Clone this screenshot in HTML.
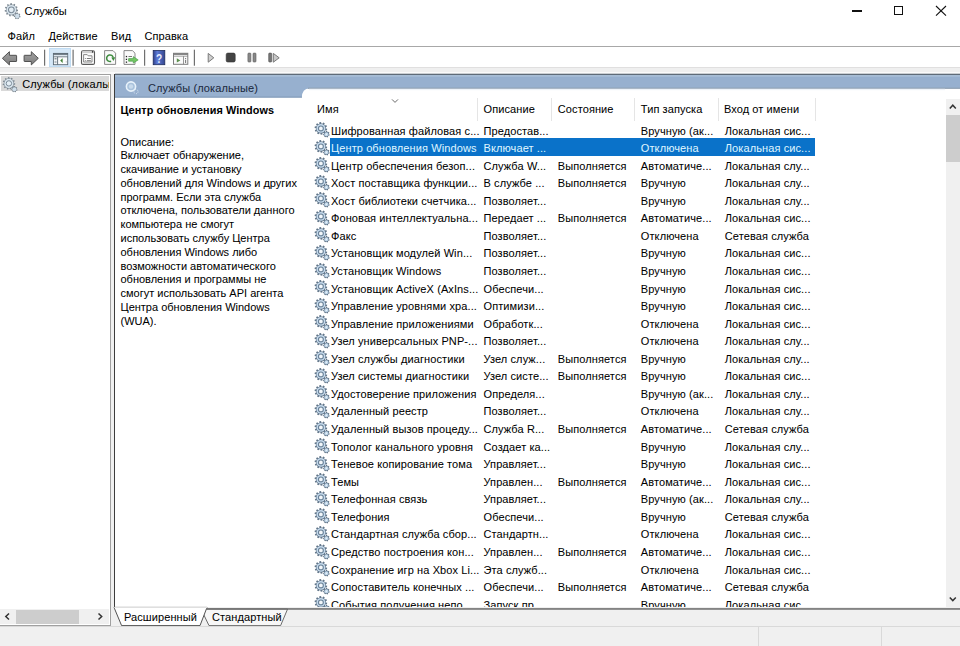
<!DOCTYPE html>
<html><head><meta charset="utf-8">
<style>
html,body{margin:0;padding:0}
body{width:960px;height:646px;position:relative;overflow:hidden;background:#fff;font-family:"Liberation Sans",sans-serif;font-size:11px;color:#000;-webkit-text-stroke:0.04px currentColor;letter-spacing:0.1px}
.a{position:absolute}
.t{position:absolute;white-space:nowrap;line-height:13px}
.row{position:absolute;left:312px;width:504px;height:17.5px}
.row .c{position:absolute;top:3px;line-height:13px;white-space:nowrap;color:#000}
.row .c0{left:19px} .row .c1{left:171.5px} .row .c2{left:245.8px} .row .c3{left:328.8px} .row .c4{left:412.8px}
.row.sel::before{content:"";position:absolute;left:18px;top:-0.8px;width:485px;height:17.5px;background:#0a72c9}
.row.sel .c{color:#dff4ff}
.gi{position:absolute;left:2.3px;top:0.6px;width:16px;height:16px}
.dl{position:absolute;left:120.5px;white-space:nowrap;line-height:13px;letter-spacing:0}
.hd{position:absolute;top:103px;line-height:13px;white-space:nowrap}
.sep{position:absolute;top:98px;width:1px;height:23px;background:#e5e5e5}
</style></head><body>
<svg width="0" height="0" style="position:absolute">
<defs>
<symbol id="gear" viewBox="0 0 16 16">
<path d="M11.90,6.43 L13.24,6.77 L12.88,8.53 L11.52,8.32 L10.93,9.36 L11.81,10.43 L10.49,11.64 L9.50,10.67 L8.42,11.16 L8.51,12.54 L6.73,12.75 L6.50,11.38 L5.33,11.15 L4.59,12.31 L3.03,11.43 L3.64,10.20 L2.84,9.32 L1.55,9.83 L0.81,8.20 L2.04,7.56 L1.90,6.37 L0.56,6.03 L0.92,4.27 L2.28,4.48 L2.87,3.44 L1.99,2.37 L3.31,1.16 L4.30,2.13 L5.38,1.64 L5.29,0.26 L7.07,0.05 L7.30,1.42 L8.47,1.65 L9.21,0.49 L10.77,1.37 L10.16,2.60 L10.96,3.48 L12.25,2.97 L12.99,4.60 L11.76,5.24 Z" fill="#62768a"/>
<circle cx="6.9" cy="6.4" r="4.45" fill="#c6dbee"/>
<circle cx="6.9" cy="6.4" r="2.45" fill="#f2f7fb" stroke="#6b8399" stroke-width="1.15"/>
<path d="M14.95,12.26 L15.68,12.52 L15.29,13.79 L14.54,13.59 L13.95,14.23 L14.20,14.97 L12.96,15.45 L12.64,14.74 L11.78,14.67 L11.35,15.33 L10.21,14.67 L10.57,13.97 L10.08,13.26 L9.30,13.33 L9.10,12.02 L9.87,11.87 L10.13,11.04 L9.58,10.48 L10.48,9.51 L11.08,10.02 L11.89,9.70 L11.98,8.93 L13.30,9.03 L13.28,9.81 L14.03,10.24 L14.70,9.83 L15.45,10.93 L14.82,11.40 Z" fill="#62768a"/>
<circle cx="12.4" cy="12.2" r="2.0" fill="#bfd6ea"/>
<circle cx="12.4" cy="12.2" r="0.75" fill="#eef5fa"/>
</symbol>
<symbol id="gearL" viewBox="0 0 16 16">
<path d="M11.99,6.15 L13.20,6.35 L13.06,7.70 L11.84,7.66 L11.32,8.94 L12.23,9.76 L11.38,10.83 L10.38,10.13 L9.24,10.93 L9.56,12.11 L8.28,12.55 L7.81,11.42 L6.42,11.48 L6.05,12.64 L4.74,12.32 L4.95,11.11 L3.75,10.41 L2.81,11.19 L1.88,10.21 L2.71,9.31 L2.08,8.07 L0.87,8.22 L0.62,6.89 L1.80,6.59 L1.94,5.20 L0.84,4.67 L1.35,3.42 L2.51,3.80 L3.38,2.71 L2.74,1.67 L3.85,0.89 L4.61,1.84 L5.93,1.39 L5.95,0.17 L7.31,0.11 L7.44,1.33 L8.79,1.66 L9.47,0.65 L10.64,1.33 L10.10,2.43 L11.05,3.44 L12.17,2.95 L12.79,4.16 L11.74,4.78 Z" fill="#7c8892"/>
<circle cx="6.9" cy="6.4" r="4.6" fill="#dae6ef"/>
<circle cx="6.9" cy="6.4" r="2.7" fill="#e4eef5" stroke="#7d8c99" stroke-width="1.0"/>
<path d="M14.90,12.32 L15.58,12.58 L15.24,13.68 L14.53,13.51 L13.86,14.23 L14.09,14.92 L13.01,15.34 L12.71,14.68 L11.72,14.61 L11.32,15.21 L10.32,14.63 L10.65,13.99 L10.10,13.17 L9.37,13.24 L9.20,12.09 L9.91,11.95 L10.20,11.01 L9.70,10.48 L10.49,9.63 L11.05,10.10 L11.97,9.74 L12.06,9.02 L13.21,9.11 L13.20,9.83 L14.05,10.33 L14.68,9.95 L15.33,10.91 L14.75,11.35 Z" fill="#7c8892"/>
<circle cx="12.4" cy="12.2" r="2.05" fill="#cfdeea"/>
</symbol>
</defs></svg>

<!-- title bar -->
<svg class="a" style="left:3.7px;top:2.6px;width:17px;height:17px" viewBox="0 0 16 16"><use href="#gearL"/></svg>
<div class="t" style="left:24.6px;top:4.8px;">Службы</div>
<div class="a" style="left:852px;top:10.3px;width:10px;height:1.3px;background:#111"></div>
<div class="a" style="left:894px;top:6.2px;width:7px;height:7px;border:1.1px solid #111"></div>
<svg class="a" style="left:935px;top:5px;width:12px;height:12px" viewBox="0 0 12 12"><path d="M1 1L11 10.6M11 1L1 10.6" stroke="#111" stroke-width="1.1"/></svg>

<!-- menu -->
<div class="t" style="left:7.6px;top:29.5px">Файл</div>
<div class="t" style="left:48.5px;top:29.5px">Действие</div>
<div class="t" style="left:111px;top:29.5px">Вид</div>
<div class="t" style="left:144.4px;top:29.5px">Справка</div>
<div class="a" style="left:0;top:46px;width:960px;height:1px;background:#a8a8a8"></div>

<!-- toolbar band -->
<div class="a" style="left:0;top:66.7px;width:960px;height:7px;background:#efefef;border-top:0.9px solid #e0dfdf;box-sizing:border-box"></div>
<div class="a" style="left:0;top:71.8px;width:960px;height:1.9px;background:#fafafa"></div>

<!-- left pane -->
<div class="a" style="left:0;top:73.5px;width:111px;height:552.5px;border-top:1.3px solid #a0a0a0;border-right:1.3px solid #a0a0a0;border-bottom:1.2px solid #a0a0a0;background:#fff;box-sizing:border-box"></div>
<div class="a" style="left:1px;top:76px;width:107.5px;height:15.3px;background:#d9d9d9"></div>
<svg class="a" style="left:2px;top:76.5px;width:16px;height:16px" viewBox="0 0 16 16"><use href="#gearL"/></svg>
<div class="a" style="left:0;top:76px;width:109px;height:16px;overflow:hidden"><div class="t" style="left:22.3px;top:1.5px">Службы (локальные)</div></div>
<div class="a" style="left:0;top:609px;width:109px;height:15px;background:#f0f0f0"></div>
<div class="a" style="left:15.6px;top:609.5px;width:63px;height:14px;background:#cdcdcd"></div>

<!-- splitter -->
<div class="a" style="left:111px;top:74px;width:3px;height:552px;background:#f0f0f0"></div>

<!-- right pane -->
<div class="a" style="left:114px;top:74px;width:846px;height:533px;background:#fff;border-left:1px solid #3c3c3c;box-sizing:border-box"></div>


<!-- vscroll -->
<div class="a" style="left:945.5px;top:98.5px;width:14.5px;height:508px;background:#f0f0f0"></div>
<div class="a" style="left:945.5px;top:114.5px;width:14.5px;height:47.5px;background:#cdcdcd"></div>
<!-- tab strip bg -->
<div class="a" style="left:111.2px;top:607px;width:849px;height:19px;background:#f0f0f0"></div>
<!-- vector overlay -->
<svg class="a" style="left:0;top:0" width="960" height="646" viewBox="0 0 960 646">
<!-- header blue -->
<rect x="115" y="73.7" width="845" height="1.6" fill="#5f6b78"/>
<path d="M115,75.3 H960 V88.4 H309.5 Q302,88.4 301.8,97.6 H115 Z" fill="#97b0cf"/>
<rect x="115" y="75.3" width="845" height="1.4" fill="#a9bfd8"/>
<rect x="115" y="96.6" width="187" height="1" fill="#8098b5"/>
<rect x="308" y="87.7" width="652" height="1.1" fill="#8d9dad"/>
<rect x="309" y="88.8" width="636" height="1.4" fill="#eef3f9"/>
<!-- toolbar: back arrow -->
<defs><linearGradient id="ag" x1="0" y1="0" x2="0" y2="1"><stop offset="0" stop-color="#a3a3a3"/><stop offset="1" stop-color="#7c7c7c"/></linearGradient></defs>
<path d="M2.4,58.3 L9.4,51.7 V55.3 H16.2 Q16.6,55.3 16.6,55.8 V61 Q16.6,61.5 16.2,61.5 H9.4 V64.9 Z" fill="url(#ag)" stroke="#505050" stroke-width="1" stroke-linejoin="round"/>
<path d="M38.3,58.3 L31.3,51.7 V55.3 H24.5 Q24.1,55.3 24.1,55.8 V61 Q24.1,61.5 24.5,61.5 H31.3 V64.9 Z" fill="url(#ag)" stroke="#505050" stroke-width="1" stroke-linejoin="round"/>
<rect x="44" y="49.7" width="1.2" height="16" fill="#707070"/>
<!-- highlighted button -->
<rect x="49.5" y="48.5" width="21" height="18" fill="#d5e7f7" stroke="#c0dcf3" stroke-width="1"/>
<rect x="53.4" y="53.4" width="14.3" height="11.3" fill="#fbfcfd" stroke="#5a6773" stroke-width="0.9"/>
<rect x="53.4" y="53.4" width="14.3" height="1.5" fill="#5a6773"/>
<rect x="53.9" y="54.9" width="13.3" height="1.6" fill="#dde6ee"/>
<line x1="53.4" y1="56.8" x2="67.7" y2="56.8" stroke="#5a6773" stroke-width="0.8"/>
<line x1="57.6" y1="56.8" x2="57.6" y2="64.7" stroke="#5a6773" stroke-width="0.9"/>
<rect x="54.5" y="58" width="2.1" height="1.5" fill="#8a959f"/>
<rect x="54.5" y="60.8" width="2.1" height="2.4" fill="#b3bcc4"/>
<path d="M62.6,58.3 L60.2,60.6 L62.6,62.9 Z" fill="#3d7f31"/>
<rect x="65.8" y="61.5" width="0.8" height="0.8" fill="#888"/>
<rect x="72.5" y="49.7" width="1.2" height="16" fill="#707070"/>
<!-- icon 4 -->
<rect x="81.5" y="50.8" width="13" height="13.6" rx="1.5" fill="#fbfbfb" stroke="#5a5a5a" stroke-width="1.1"/>
<rect x="82.2" y="51.5" width="11.6" height="1.6" fill="#cfcfcf"/>
<circle cx="92.6" cy="51.9" r="0.8" fill="#333"/>
<path d="M83.6,54.6 H87.2 L88.2,55.8 H92 V62 H83.6 Z" fill="#fdfdfd" stroke="#7d7d7d" stroke-width="0.9"/>
<rect x="84.9" y="58" width="0.9" height="0.9" fill="#777"/>
<rect x="84.9" y="60.2" width="0.9" height="0.9" fill="#777"/>
<line x1="86.8" y1="58.5" x2="90.9" y2="58.5" stroke="#6a6a6a" stroke-width="0.9"/>
<line x1="86.8" y1="60.7" x2="90.9" y2="60.7" stroke="#6a6a6a" stroke-width="0.9"/>
<!-- refresh doc -->
<path d="M104.6,50.6 H113 L115.6,53.2 V64.4 H104.6 Z" fill="#fafafa" stroke="#7a7a7a" stroke-width="0.9"/>
<path d="M111.1,61.3 A3.3,3.3 0 1 1 113.2,57.6" fill="none" stroke="#3f8b3f" stroke-width="1.5"/>
<path d="M111.3,57.4 L115.3,57.2 L113.4,61.0 Z" fill="#3f8b3f"/>
<!-- export doc -->
<path d="M124,50.6 H132.4 L135,53.2 V64.4 H124 Z" fill="#fafafa" stroke="#7a7a7a" stroke-width="0.9"/>
<rect x="125.8" y="55.9" width="1.3" height="1.3" fill="#222"/>
<rect x="125.8" y="58.7" width="1.3" height="1.3" fill="#222"/>
<rect x="125.8" y="61.5" width="1.3" height="1.3" fill="#222"/>
<line x1="128.5" y1="56.5" x2="132" y2="56.5" stroke="#555" stroke-width="0.8"/>
<path d="M128.6,58.6 H133.3 V56.6 L138.2,59.9 L133.3,63.1 V61.2 H128.6 Z" fill="#73c763" stroke="#3f963f" stroke-width="0.6"/>
<rect x="144" y="49.7" width="1.2" height="16" fill="#707070"/>
<!-- help -->
<defs><linearGradient id="hg" x1="0" y1="0" x2="1" y2="0"><stop offset="0" stop-color="#2e3f8c"/><stop offset="0.35" stop-color="#5d7ad6"/><stop offset="1" stop-color="#34468f"/></linearGradient></defs>
<rect x="153.2" y="50.5" width="11.6" height="14.2" fill="url(#hg)" stroke="#1d2b5c" stroke-width="0.8"/>
<text x="159.2" y="62.6" font-family="Liberation Sans" font-weight="bold" font-size="12" fill="#e6ecff" text-anchor="middle" transform="translate(159.2 62.6) scale(0.85 1.05) translate(-159.2 -62.6)" style="-webkit-text-stroke:0">?</text>
<!-- props -->
<rect x="173.5" y="53.3" width="14.3" height="11" fill="#fafafa" stroke="#7c7c7c" stroke-width="1"/>
<rect x="173.5" y="53.3" width="14.3" height="1.6" fill="#7c7c7c"/>
<line x1="173.5" y1="56.2" x2="187.8" y2="56.2" stroke="#7c7c7c" stroke-width="0.7"/>
<line x1="183.5" y1="56.2" x2="183.5" y2="64.3" stroke="#7c7c7c" stroke-width="0.8"/>
<path d="M176.8,58.2 L180.4,60.4 L176.8,62.6 Z" fill="#5c8f4e"/>
<rect x="185.2" y="58" width="0.9" height="1" fill="#666"/>
<rect x="185.2" y="59.8" width="0.9" height="3.2" fill="#666"/>
<rect x="193.8" y="49.7" width="1.2" height="16" fill="#707070"/>
<!-- play stop pause resume -->
<path d="M208.2,53.4 L213.8,57.8 L208.2,62.2 Z" fill="#cfcfcf" stroke="#7a7a7a" stroke-width="1"/>
<rect x="226.2" y="53.1" width="9" height="8.9" rx="1.6" fill="#444" stroke="#333" stroke-width="0.6"/>
<rect x="247.9" y="53.1" width="3" height="8.9" rx="0.8" fill="#888" stroke="#5d5d5d" stroke-width="0.6"/>
<rect x="253" y="53.1" width="3" height="8.9" rx="0.8" fill="#888" stroke="#5d5d5d" stroke-width="0.6"/>
<rect x="268.7" y="53.1" width="3" height="8.9" rx="0.8" fill="#777" stroke="#4d4d4d" stroke-width="0.6"/>
<path d="M273.3,53.4 L279.2,57.8 L273.3,62.2 Z" fill="#c8c8c8" stroke="#7a7a7a" stroke-width="1"/>
<!-- sort chevron -->
<path d="M392,99.4 L395,102.4 L398,99.4" fill="none" stroke="#6a6a6a" stroke-width="1"/>
<!-- vscroll arrows -->
<path d="M949.8,108.4 L952.8,105.2 L955.8,108.4" fill="none" stroke="#333" stroke-width="1.5"/>
<path d="M949.8,597.4 L952.8,600.6 L955.8,597.4" fill="none" stroke="#333" stroke-width="1.5"/>
<!-- left hscroll arrows -->
<path d="M9,613.5 L5.8,616.5 L9,619.5" fill="none" stroke="#333" stroke-width="1.5"/>
<path d="M98.5,613.5 L101.7,616.5 L98.5,619.5" fill="none" stroke="#333" stroke-width="1.5"/>
<!-- tabs -->
<path d="M201,609 L209,625.6 H280.6 L287.6,609 Z" fill="#f7f7f7" stroke="#5c5c5c" stroke-width="0.9"/>
<rect x="207" y="608.2" width="753" height="1.5" fill="#6a6a6a"/>
<path d="M114,607.4 L121.6,625.6 H200 L207,607.4 Z" fill="#fff" stroke="#3f3f3f" stroke-width="0.9"/>
<rect x="114.5" y="607.2" width="92.5" height="1" fill="#fff"/>
<line x1="114" y1="607.4" x2="207" y2="607.4" stroke="#e0e0e0" stroke-width="0.7"/>
</svg>

<!-- header text -->
<svg class="a" style="left:124px;top:79.5px;width:16px;height:16px" viewBox="0 0 16 16">
<circle cx="7" cy="6.5" r="4.6" fill="#a9c2dc" stroke="#e9f3fb" stroke-width="1.6"/>
<circle cx="7" cy="6.5" r="2.2" fill="#c9dbec"/>
<circle cx="12" cy="11.6" r="2.1" fill="none" stroke="#dbe8f4" stroke-width="1" stroke-dasharray="1 1"/>
</svg>
<div class="t" style="left:148px;top:81.5px;color:#1c2a40">Службы (локальные)</div>

<!-- description -->
<div class="t" style="left:120.4px;top:104.4px;font-weight:bold;font-size:10.85px;-webkit-text-stroke:0">Центр обновления Windows</div>
<div class="dl" style="top:135.60px">Описание:</div><div class="dl" style="top:149.37px">Включает обнаружение,</div><div class="dl" style="top:163.14px">скачивание и установку</div><div class="dl" style="top:176.91px">обновлений для Windows и других</div><div class="dl" style="top:190.68px">программ. Если эта служба</div><div class="dl" style="top:204.45px">отключена, пользователи данного</div><div class="dl" style="top:218.22px">компьютера не смогут</div><div class="dl" style="top:231.99px">использовать службу Центра</div><div class="dl" style="top:245.76px">обновления Windows либо</div><div class="dl" style="top:259.53px">возможности автоматического</div><div class="dl" style="top:273.30px">обновления и программы не</div><div class="dl" style="top:287.07px">смогут использовать API агента</div><div class="dl" style="top:300.84px">Центра обновления Windows</div><div class="dl" style="top:314.61px">(WUA).</div>

<!-- list header -->
<div class="hd" style="left:317px">Имя</div>
<div class="hd" style="left:483.5px">Описание</div>
<div class="hd" style="left:557.8px">Состояние</div>
<div class="hd" style="left:640.8px">Тип запуска</div>
<div class="hd" style="left:723.9px">Вход от имени</div>
<div class="sep" style="left:477px"></div>
<div class="sep" style="left:551px"></div>
<div class="sep" style="left:634px"></div>
<div class="sep" style="left:718px"></div>
<div class="sep" style="left:815px"></div>

<!-- rows -->
<div class="a" style="left:115px;top:120px;width:830px;height:487px;overflow:hidden">
<div class="a" style="left:-115px;top:-120px;width:960px;height:646px">
<div class="row" style="top:121.50px"><svg class="gi" viewBox="0 0 16 16"><use href="#gear"/></svg><span class="c c0">Шифрованная файловая с...</span><span class="c c1">Предостав...</span><span class="c c3">Вручную (ак...</span><span class="c c4">Локальная сис...</span></div>
<div class="row sel" style="top:139.06px"><svg class="gi" viewBox="0 0 16 16"><use href="#gear"/></svg><span class="c c0">Центр обновления Windows</span><span class="c c1">Включает ...</span><span class="c c3">Отключена</span><span class="c c4">Локальная сис...</span></div>
<div class="row" style="top:156.62px"><svg class="gi" viewBox="0 0 16 16"><use href="#gear"/></svg><span class="c c0">Центр обеспечения безоп...</span><span class="c c1">Служба W...</span><span class="c c2">Выполняется</span><span class="c c3">Автоматиче...</span><span class="c c4">Локальная слу...</span></div>
<div class="row" style="top:174.18px"><svg class="gi" viewBox="0 0 16 16"><use href="#gear"/></svg><span class="c c0">Хост поставщика функции...</span><span class="c c1">В службе ...</span><span class="c c2">Выполняется</span><span class="c c3">Вручную</span><span class="c c4">Локальная слу...</span></div>
<div class="row" style="top:191.74px"><svg class="gi" viewBox="0 0 16 16"><use href="#gear"/></svg><span class="c c0">Хост библиотеки счетчика...</span><span class="c c1">Позволяет...</span><span class="c c3">Вручную</span><span class="c c4">Локальная слу...</span></div>
<div class="row" style="top:209.30px"><svg class="gi" viewBox="0 0 16 16"><use href="#gear"/></svg><span class="c c0">Фоновая интеллектуальна...</span><span class="c c1">Передает ...</span><span class="c c2">Выполняется</span><span class="c c3">Автоматиче...</span><span class="c c4">Локальная сис...</span></div>
<div class="row" style="top:226.86px"><svg class="gi" viewBox="0 0 16 16"><use href="#gear"/></svg><span class="c c0">Факс</span><span class="c c1">Позволяет...</span><span class="c c3">Отключена</span><span class="c c4">Сетевая служба</span></div>
<div class="row" style="top:244.42px"><svg class="gi" viewBox="0 0 16 16"><use href="#gear"/></svg><span class="c c0">Установщик модулей Win...</span><span class="c c1">Позволяет...</span><span class="c c3">Вручную</span><span class="c c4">Локальная сис...</span></div>
<div class="row" style="top:261.98px"><svg class="gi" viewBox="0 0 16 16"><use href="#gear"/></svg><span class="c c0">Установщик Windows</span><span class="c c1">Позволяет...</span><span class="c c3">Вручную</span><span class="c c4">Локальная сис...</span></div>
<div class="row" style="top:279.54px"><svg class="gi" viewBox="0 0 16 16"><use href="#gear"/></svg><span class="c c0">Установщик ActiveX (AxIns...</span><span class="c c1">Обеспечи...</span><span class="c c3">Вручную</span><span class="c c4">Локальная сис...</span></div>
<div class="row" style="top:297.10px"><svg class="gi" viewBox="0 0 16 16"><use href="#gear"/></svg><span class="c c0">Управление уровнями хра...</span><span class="c c1">Оптимизи...</span><span class="c c3">Вручную</span><span class="c c4">Локальная сис...</span></div>
<div class="row" style="top:314.66px"><svg class="gi" viewBox="0 0 16 16"><use href="#gear"/></svg><span class="c c0">Управление приложениями</span><span class="c c1">Обработк...</span><span class="c c3">Отключена</span><span class="c c4">Локальная сис...</span></div>
<div class="row" style="top:332.22px"><svg class="gi" viewBox="0 0 16 16"><use href="#gear"/></svg><span class="c c0">Узел универсальных PNP-...</span><span class="c c1">Позволяет...</span><span class="c c3">Отключена</span><span class="c c4">Локальная слу...</span></div>
<div class="row" style="top:349.78px"><svg class="gi" viewBox="0 0 16 16"><use href="#gear"/></svg><span class="c c0">Узел службы диагностики</span><span class="c c1">Узел служ...</span><span class="c c2">Выполняется</span><span class="c c3">Вручную</span><span class="c c4">Локальная слу...</span></div>
<div class="row" style="top:367.34px"><svg class="gi" viewBox="0 0 16 16"><use href="#gear"/></svg><span class="c c0">Узел системы диагностики</span><span class="c c1">Узел систе...</span><span class="c c2">Выполняется</span><span class="c c3">Вручную</span><span class="c c4">Локальная сис...</span></div>
<div class="row" style="top:384.90px"><svg class="gi" viewBox="0 0 16 16"><use href="#gear"/></svg><span class="c c0">Удостоверение приложения</span><span class="c c1">Определя...</span><span class="c c3">Вручную (ак...</span><span class="c c4">Локальная слу...</span></div>
<div class="row" style="top:402.46px"><svg class="gi" viewBox="0 0 16 16"><use href="#gear"/></svg><span class="c c0">Удаленный реестр</span><span class="c c1">Позволяет...</span><span class="c c3">Отключена</span><span class="c c4">Локальная слу...</span></div>
<div class="row" style="top:420.02px"><svg class="gi" viewBox="0 0 16 16"><use href="#gear"/></svg><span class="c c0">Удаленный вызов процеду...</span><span class="c c1">Служба R...</span><span class="c c2">Выполняется</span><span class="c c3">Автоматиче...</span><span class="c c4">Сетевая служба</span></div>
<div class="row" style="top:437.58px"><svg class="gi" viewBox="0 0 16 16"><use href="#gear"/></svg><span class="c c0">Тополог канального уровня</span><span class="c c1">Создает ка...</span><span class="c c3">Вручную</span><span class="c c4">Локальная слу...</span></div>
<div class="row" style="top:455.14px"><svg class="gi" viewBox="0 0 16 16"><use href="#gear"/></svg><span class="c c0">Теневое копирование тома</span><span class="c c1">Управляет...</span><span class="c c3">Вручную</span><span class="c c4">Локальная сис...</span></div>
<div class="row" style="top:472.70px"><svg class="gi" viewBox="0 0 16 16"><use href="#gear"/></svg><span class="c c0">Темы</span><span class="c c1">Управлен...</span><span class="c c2">Выполняется</span><span class="c c3">Автоматиче...</span><span class="c c4">Локальная сис...</span></div>
<div class="row" style="top:490.26px"><svg class="gi" viewBox="0 0 16 16"><use href="#gear"/></svg><span class="c c0">Телефонная связь</span><span class="c c1">Управляет...</span><span class="c c3">Вручную (ак...</span><span class="c c4">Локальная слу...</span></div>
<div class="row" style="top:507.82px"><svg class="gi" viewBox="0 0 16 16"><use href="#gear"/></svg><span class="c c0">Телефония</span><span class="c c1">Обеспечи...</span><span class="c c3">Вручную</span><span class="c c4">Сетевая служба</span></div>
<div class="row" style="top:525.38px"><svg class="gi" viewBox="0 0 16 16"><use href="#gear"/></svg><span class="c c0">Стандартная служба сбор...</span><span class="c c1">Стандартн...</span><span class="c c3">Отключена</span><span class="c c4">Локальная сис...</span></div>
<div class="row" style="top:542.94px"><svg class="gi" viewBox="0 0 16 16"><use href="#gear"/></svg><span class="c c0">Средство построения кон...</span><span class="c c1">Управлен...</span><span class="c c2">Выполняется</span><span class="c c3">Автоматиче...</span><span class="c c4">Локальная сис...</span></div>
<div class="row" style="top:560.50px"><svg class="gi" viewBox="0 0 16 16"><use href="#gear"/></svg><span class="c c0">Сохранение игр на Xbox Li...</span><span class="c c1">Эта служб...</span><span class="c c3">Отключена</span><span class="c c4">Локальная сис...</span></div>
<div class="row" style="top:578.06px"><svg class="gi" viewBox="0 0 16 16"><use href="#gear"/></svg><span class="c c0">Сопоставитель конечных ...</span><span class="c c1">Обеспечи...</span><span class="c c2">Выполняется</span><span class="c c3">Автоматиче...</span><span class="c c4">Сетевая служба</span></div>
<div class="row" style="top:595.62px"><svg class="gi" viewBox="0 0 16 16"><use href="#gear"/></svg><span class="c c0">События получения непо...</span><span class="c c1">Запуск пр...</span><span class="c c3">Вручную</span><span class="c c4">Локальная сис...</span></div>
</div></div>


<!-- tab strip -->
<div class="t" style="left:123.9px;top:610.8px">Расширенный</div>
<div class="t" style="left:212px;top:610.8px">Стандартный</div>

<!-- status bar -->
<div class="a" style="left:0;top:626px;width:960px;height:20px;background:#f0f0f0;border-top:1px solid #d9d9d9;box-sizing:border-box"></div>
<div class="a" style="left:758px;top:626px;width:1px;height:20px;background:#d9d9d9"></div>
<div class="a" style="left:881px;top:626px;width:1px;height:20px;background:#d9d9d9"></div>
</body></html>
